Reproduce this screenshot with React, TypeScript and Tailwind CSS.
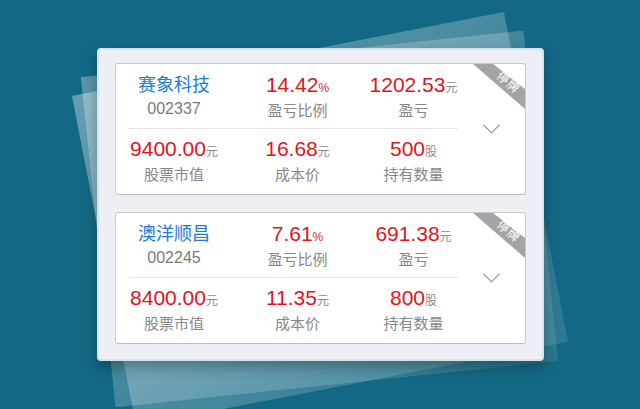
import React from "react";

type Stock = {
  name: string;
  code: string;
  ratio: string;
  profit: string;
  marketValue: string;
  cost: string;
  qty: string;
};

const stocks: Stock[] = [
  { name: "赛象科技", code: "002337", ratio: "14.42", profit: "1202.53", marketValue: "9400.00", cost: "16.68", qty: "500" },
  { name: "澳洋顺昌", code: "002245", ratio: "7.61", profit: "691.38", marketValue: "8400.00", cost: "11.35", qty: "800" },
];

const FONT = { fontFamily: '"Liberation Sans", "Noto Sans CJK SC", sans-serif' };

function Value({ v, unit, unitRed }: { v: string; unit: string; unitRed?: boolean }) {
  return (
    <div className="flex items-baseline justify-center leading-[24px]">
      <span className="text-[21px] text-[#e3141d]">{v}</span>
      <span className={"text-[12px] " + (unitRed ? "text-[#e3141d]" : "text-[#8a8a8a]")}>{unit}</span>
    </div>
  );
}

function Label({ t }: { t: string }) {
  return <div className="text-center text-[15px] leading-[22px] text-[#878787]">{t}</div>;
}

function Card({ s }: { s: Stock }) {
  return (
    <div className="relative flex h-[132px] w-[411px] overflow-hidden rounded-[3px] border border-[#c9c9cd] border-b-[#bdbdc1] bg-white">
      <div className="flex w-[355px] flex-col">
        <div className="grid grid-cols-[117px_130px_102px] pt-[9px]">
          <div className="flex flex-col items-center">
            <div className="text-[18px] leading-[24px] text-[#1f7bd3]">{s.name}</div>
            <div className="text-[16px] leading-[24px] text-[#7a7a7a]">{s.code}</div>
          </div>
          <div className="flex flex-col items-center">
            <Value v={s.ratio} unit="%" unitRed />
            <div className="leading-[24px]"><Label t="盈亏比例" /></div>
          </div>
          <div className="flex flex-col items-center">
            <Value v={s.profit} unit="元" />
            <div className="leading-[24px]"><Label t="盈亏" /></div>
          </div>
        </div>
        <div className="ml-[13px] mt-[6px] h-px w-[329px] bg-[#e4e4e6]" />
        <div className="grid grid-cols-[117px_130px_102px] pt-[8px]">
          <div className="flex flex-col items-center">
            <Value v={s.marketValue} unit="元" />
            <Label t="股票市值" />
          </div>
          <div className="flex flex-col items-center">
            <Value v={s.cost} unit="元" />
            <Label t="成本价" />
          </div>
          <div className="flex flex-col items-center">
            <Value v={s.qty} unit="股" />
            <Label t="持有数量" />
          </div>
        </div>
      </div>
      <div className="flex w-[42px] items-center justify-center">
        <svg width="17" height="10" viewBox="0 0 17 10">
          <polyline points="0.5,0.8 8.5,8.8 16.5,0.8" fill="none" stroke="#8c8c8c" strokeWidth="1.1" />
        </svg>
      </div>
      <svg className="absolute right-0 top-0" width="53" height="47" viewBox="0 0 53 47">
        <polygon points="1,0 21,0 53,25 53,45" fill="#a4a4a4" />
      </svg>
      <div className="absolute left-[392px] top-[19px] -translate-x-1/2 -translate-y-1/2 rotate-[40deg] whitespace-nowrap text-[12px] leading-[13px] tracking-[1px] text-white">
        停牌
      </div>
    </div>
  );
}

export default function App() {
  return (
    <div className="relative flex h-[409px] w-[640px] items-center justify-center overflow-hidden bg-[#136985]" style={FONT}>
      <div className="relative h-[313px] w-[447px]">
        <div className="absolute left-[3px] top-[3px] h-[336px] w-[440px] -rotate-[11deg] bg-gradient-to-br from-white/35 to-white/10" />
        <div className="absolute left-[0px] top-[5px] h-[332px] w-[445px] -rotate-[6deg] bg-gradient-to-br from-white/30 to-white/10" />
        <div className="relative flex h-full w-full flex-col gap-[17px] rounded-[4px] border-2 border-[#d6e3eb] bg-[#eeeff4] pl-[16px] pt-[13px] shadow-[0_6px_14px_rgba(0,0,0,0.3)]">
          {stocks.map((s) => (
            <Card key={s.code} s={s} />
          ))}
        </div>
      </div>
    </div>
  );
}
